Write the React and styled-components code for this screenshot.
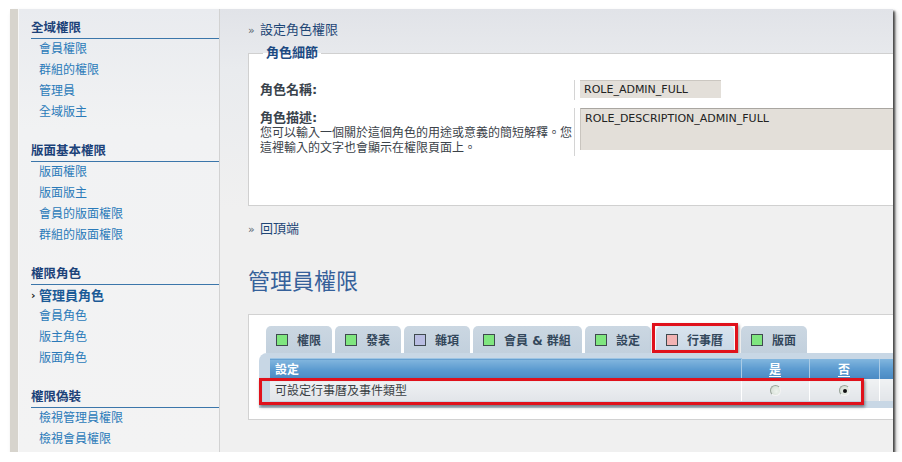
import React from 'react';
import styled, { createGlobalStyle } from 'styled-components';

const GlobalStyle = createGlobalStyle`
    html, body {
        margin: 0;
        background: #fff;
    }
    body {
        font-family: "DejaVu Sans", "Noto Sans CJK TC", sans-serif;
        font-size: 12px;
        color: #333;
    }
`;

const menu = [
    { title: '全域權限', items: ['會員權限', '群組的權限', '管理員', '全域版主'] },
    { title: '版面基本權限', items: ['版面權限', '版面版主', '會員的版面權限', '群組的版面權限'] },
    { title: '權限角色', items: ['管理員角色', '會員角色', '版主角色', '版面角色'], active: 0 },
    { title: '權限偽裝', items: ['檢視管理員權限', '檢視會員權限'] },
];

const tabs = [
    { label: '權限', color: '#7fe67f' },
    { label: '發表', color: '#7fe67f' },
    { label: '雜項', color: '#b9bde2' },
    { label: '會員 & 群組', color: '#7fe67f' },
    { label: '設定', color: '#7fe67f' },
    { label: '行事曆', color: '#f2b3b3', active: true },
    { label: '版面', color: '#7fe67f' },
];

function Sidebar() {
    return (
        <Side>
            {menu.map((group, idx) => (
                <Group key={idx}>
                    <GroupTitle>{group.title}</GroupTitle>
                    {group.items.map((item, i) => (
                        <MenuItem key={i} $active={group.active === i}>
                            {group.active === i && <Marker>›</Marker>}
                            {item}
                        </MenuItem>
                    ))}
                </Group>
            ))}
        </Side>
    );
}

function Radio({ checked }) {
    return <RadioDot $checked={checked} />;
}

function App() {
    return (
        <>
            <GlobalStyle />
            <Page>
                <Window>
                    <Edge />
                    <Sidebar />
                    <Main>
                        <Crumb><Raquo>»</Raquo>設定角色權限</Crumb>
                        <Details>
                            <Legend>角色細節</Legend>
                            <FieldRow>
                                <Label $single><b>角色名稱:</b></Label>
                                <Field><NameInput>ROLE_ADMIN_FULL</NameInput></Field>
                            </FieldRow>
                            <FieldRow $gap>
                                <Label>
                                    <b>角色描述:</b><br />
                                    您可以輸入一個關於這個角色的用途或意義的簡短解釋。您這裡輸入的文字也會顯示在權限頁面上。
                                </Label>
                                <Field><DescInput>ROLE_DESCRIPTION_ADMIN_FULL</DescInput></Field>
                            </FieldRow>
                        </Details>
                        <Crumb $top><Raquo>»</Raquo>回頂端</Crumb>
                        <PageTitle>管理員權限</PageTitle>
                        <Panel>
                            <TabRow>
                                {tabs.map((tab, idx) => (
                                    <Tab key={idx} $active={tab.active}>
                                        <Swatch $color={tab.color} />
                                        {tab.label}
                                        {tab.active && <Highlight $tab />}
                                    </Tab>
                                ))}
                            </TabRow>
                            <TabBody>
                                <Table>
                                    <thead>
                                        <tr>
                                            <Th>設定</Th>
                                            <Th $center><u>是</u></Th>
                                            <Th $center><u>否</u></Th>
                                            <Th />
                                        </tr>
                                    </thead>
                                    <tbody>
                                        <tr>
                                            <Td>可設定行事曆及事件類型</Td>
                                            <Td $center><Radio /></Td>
                                            <Td $center><Radio checked /></Td>
                                            <Td />
                                        </tr>
                                    </tbody>
                                </Table>
                                <Highlight />
                            </TabBody>
                        </Panel>
                    </Main>
                </Window>
            </Page>
        </>
    );
}
export default App;

const Page = styled.div`
    padding: 9px 0 0 10px;
`;

const Window = styled.div`
    display: flex;
    width: 883px;
    height: 443px;
    overflow: hidden;
    background: #f0f0f0;
    box-shadow: 2px 2px 2px rgba(0, 0, 0, 0.65), 3px 4px 5px rgba(0, 0, 0, 0.25);
`;

const Edge = styled.div`
    width: 8px;
    flex-shrink: 0;
    background: #d7d4cd;
`;

const Side = styled.div`
    width: 202px;
    flex-shrink: 0;
    padding: 9px 0 0 12px;
    box-sizing: border-box;
    border-left: 1px solid #f7f7f7;
    border-right: 1px solid #d2d2d2;
    background: linear-gradient(180deg, #e9ebef 0, #f1f2f3 120px, #f3f3f3 100%);
`;

const Group = styled.div`
    margin-bottom: 18px;
`;

const GroupTitle = styled.div`
    height: 20px;
    line-height: 20px;
    font-size: 12.5px;
    font-weight: 700;
    color: #1c4279;
    border-bottom: 1px solid #3b76aa;
`;

const MenuItem = styled.div`
    position: relative;
    height: 21px;
    line-height: 21px;
    padding-left: 8px;
    font-size: ${(p) => (p.$active ? '13px' : '12px')};
    font-weight: ${(p) => (p.$active ? 700 : 400)};
    color: ${(p) => (p.$active ? '#1b5a96' : '#2a7ab9')};
`;

const Marker = styled.span`
    position: absolute;
    left: 0;
    top: 0;
    font-size: 11px;
    font-weight: 700;
    color: #222;
`;

const Main = styled.div`
    flex: 1;
    overflow: hidden;
    padding: 12px 0 0 28px;
    background: linear-gradient(180deg, #e1e3e8 0, #e9ebee 60px, #f0f0f0 200px);
`;

const Crumb = styled.div`
    height: 18px;
    line-height: 18px;
    font-size: 13px;
    color: #1e4676;
    margin-top: ${(p) => (p.$top ? '14px' : '0')};
`;

const Raquo = styled.span`
    display: inline-block;
    width: 12px;
    font-size: 11px;
    color: #5a6670;
`;

const Details = styled.fieldset`
    width: 700px;
    margin: 6px 0 0;
    padding: 8px 0 49px 11px;
    border: 1px solid #d0d0d0;
    background: #fff;
`;

const Legend = styled.legend`
    margin-left: 3px;
    padding: 0 3px;
    font-size: 13px;
    line-height: 16px;
    font-weight: 700;
    color: #1c4a82;
`;

const FieldRow = styled.div`
    display: flex;
    margin-top: ${(p) => (p.$gap ? '8px' : '11px')};
`;

const Label = styled.div`
    width: 314px;
    flex-shrink: 0;
    padding-top: ${(p) => (p.$single ? '0' : '2px')};
    border-right: 1px solid #d4d4d4;
    font-size: 12px;
    line-height: ${(p) => (p.$single ? '20px' : '15px')};
    color: #3b4249;

    b {
        font-size: 13px;
        color: #3a434c;
    }
`;

const Field = styled.div`
    flex: 1;
    padding-left: 5px;
`;

const NameInput = styled.div`
    width: 141px;
    height: 18px;
    line-height: 18px;
    padding-left: 4px;
    background: #e3dfd9;
    border-top: 1px solid #cbc7c1;
    box-sizing: border-box;
    font-size: 11px;
    color: #222;
`;

const DescInput = styled.div`
    height: 42px;
    padding: 2px 0 0 4px;
    box-sizing: border-box;
    background: #e3dfd9;
    border-top: 1px solid #a9a6a1;
    border-left: 1px solid #c9c5bf;
    font-size: 11px;
    line-height: 15px;
    color: #222;
`;

const PageTitle = styled.h2`
    margin: 30px 0 0;
    height: 28px;
    line-height: 28px;
    font-size: 22px;
    font-weight: 400;
    color: #35609a;
`;

const Panel = styled.div`
    width: 700px;
    margin-top: 18px;
    padding: 11px 0 11px 10px;
    background: #fff;
    border: 1px solid #d2d2d2;
`;

const TabRow = styled.div`
    display: flex;
    gap: 3px;
    padding-left: 7px;
    height: 27px;
`;

const Tab = styled.div`
    position: relative;
    display: flex;
    align-items: center;
    gap: 9px;
    margin: ${(p) => (p.$active ? '0 4px 0 2px' : '0')};
    padding: 0 11px 0 10px;
    border-radius: 5px 5px 0 0;
    background: ${(p) => (p.$active
        ? 'linear-gradient(180deg, #d9e4ee 0, #c9d7e5 100%)'
        : 'linear-gradient(180deg, #cbd7e2 0, #c2d0dd 100%)')};
    font-size: 12px;
    font-weight: 700;
    color: #33475b;
    white-space: nowrap;
`;

const Swatch = styled.span`
    width: 10px;
    height: 10px;
    flex-shrink: 0;
    border: 1px solid #3f4a4f;
    background: ${(p) => p.$color};
`;

const TabBody = styled.div`
    position: relative;
    padding: 5px 0 7px 11px;
    border-radius: 8px 0 0 0;
    background: #c8d7e5;
`;

const Table = styled.table`
    width: 100%;
    border-collapse: collapse;
    table-layout: fixed;

    th, td {
        box-sizing: border-box;
    }
    th:nth-child(1), td:nth-child(1) { width: 471px; }
    th:nth-child(2), td:nth-child(2) { width: 68px; }
    th:nth-child(3), td:nth-child(3) { width: 70px; }
`;

const Th = styled.th`
    height: 20px;
    padding: 0 5px;
    text-align: ${(p) => (p.$center ? 'center' : 'left')};
    font-size: 12px;
    font-weight: 700;
    color: #fff;
    background: linear-gradient(180deg, #82b6de 0, #5c9bd0 50%, #4b8ac3 100%);
    border-left: 1px solid #a9cbe6;

    &:first-child {
        border-left: 0;
        border-top: 1px solid #9cc4e4;
    }
    u {
        text-decoration-thickness: 1px;
        text-underline-offset: 2px;
    }
`;

const Td = styled.td`
    height: 22px;
    padding: 0 5px;
    text-align: ${(p) => (p.$center ? 'center' : 'left')};
    font-size: 12px;
    color: #3a3f44;
    background: linear-gradient(180deg, #f0f2f4 0, #e2e5e9 100%);
    border-left: 1px solid #fff;

    &:first-child {
        border-left: 0;
    }
`;

const RadioDot = styled.span`
    position: relative;
    display: inline-block;
    vertical-align: middle;
    width: 11px;
    height: 11px;
    border-radius: 50%;
    border: 1px solid #9aa59a;
    border-right-color: #f4f4f4;
    border-bottom-color: #f4f4f4;
    background: radial-gradient(circle at 60% 60%, #eef3ee 0, #cfd9cf 100%);
    box-sizing: border-box;

    &::after {
        content: '';
        display: ${(p) => (p.$checked ? 'block' : 'none')};
        position: absolute;
        left: 3px;
        top: 3px;
        width: 4px;
        height: 4px;
        border-radius: 50%;
        background: #111;
    }
`;

const Highlight = styled.span`
    position: absolute;
    pointer-events: none;
    border: 3px solid #e0111b;
    box-shadow: 1px 2px 3px rgba(0, 0, 0, 0.45), inset 0 0 1px rgba(0, 0, 0, 0.2);
    ${(p) => (p.$tab
        ? 'left: -4px; right: -4px; top: -3px; bottom: 0;'
        : 'left: 0; top: 25px; width: 605px; height: 27px; box-sizing: border-box;')}
`;
